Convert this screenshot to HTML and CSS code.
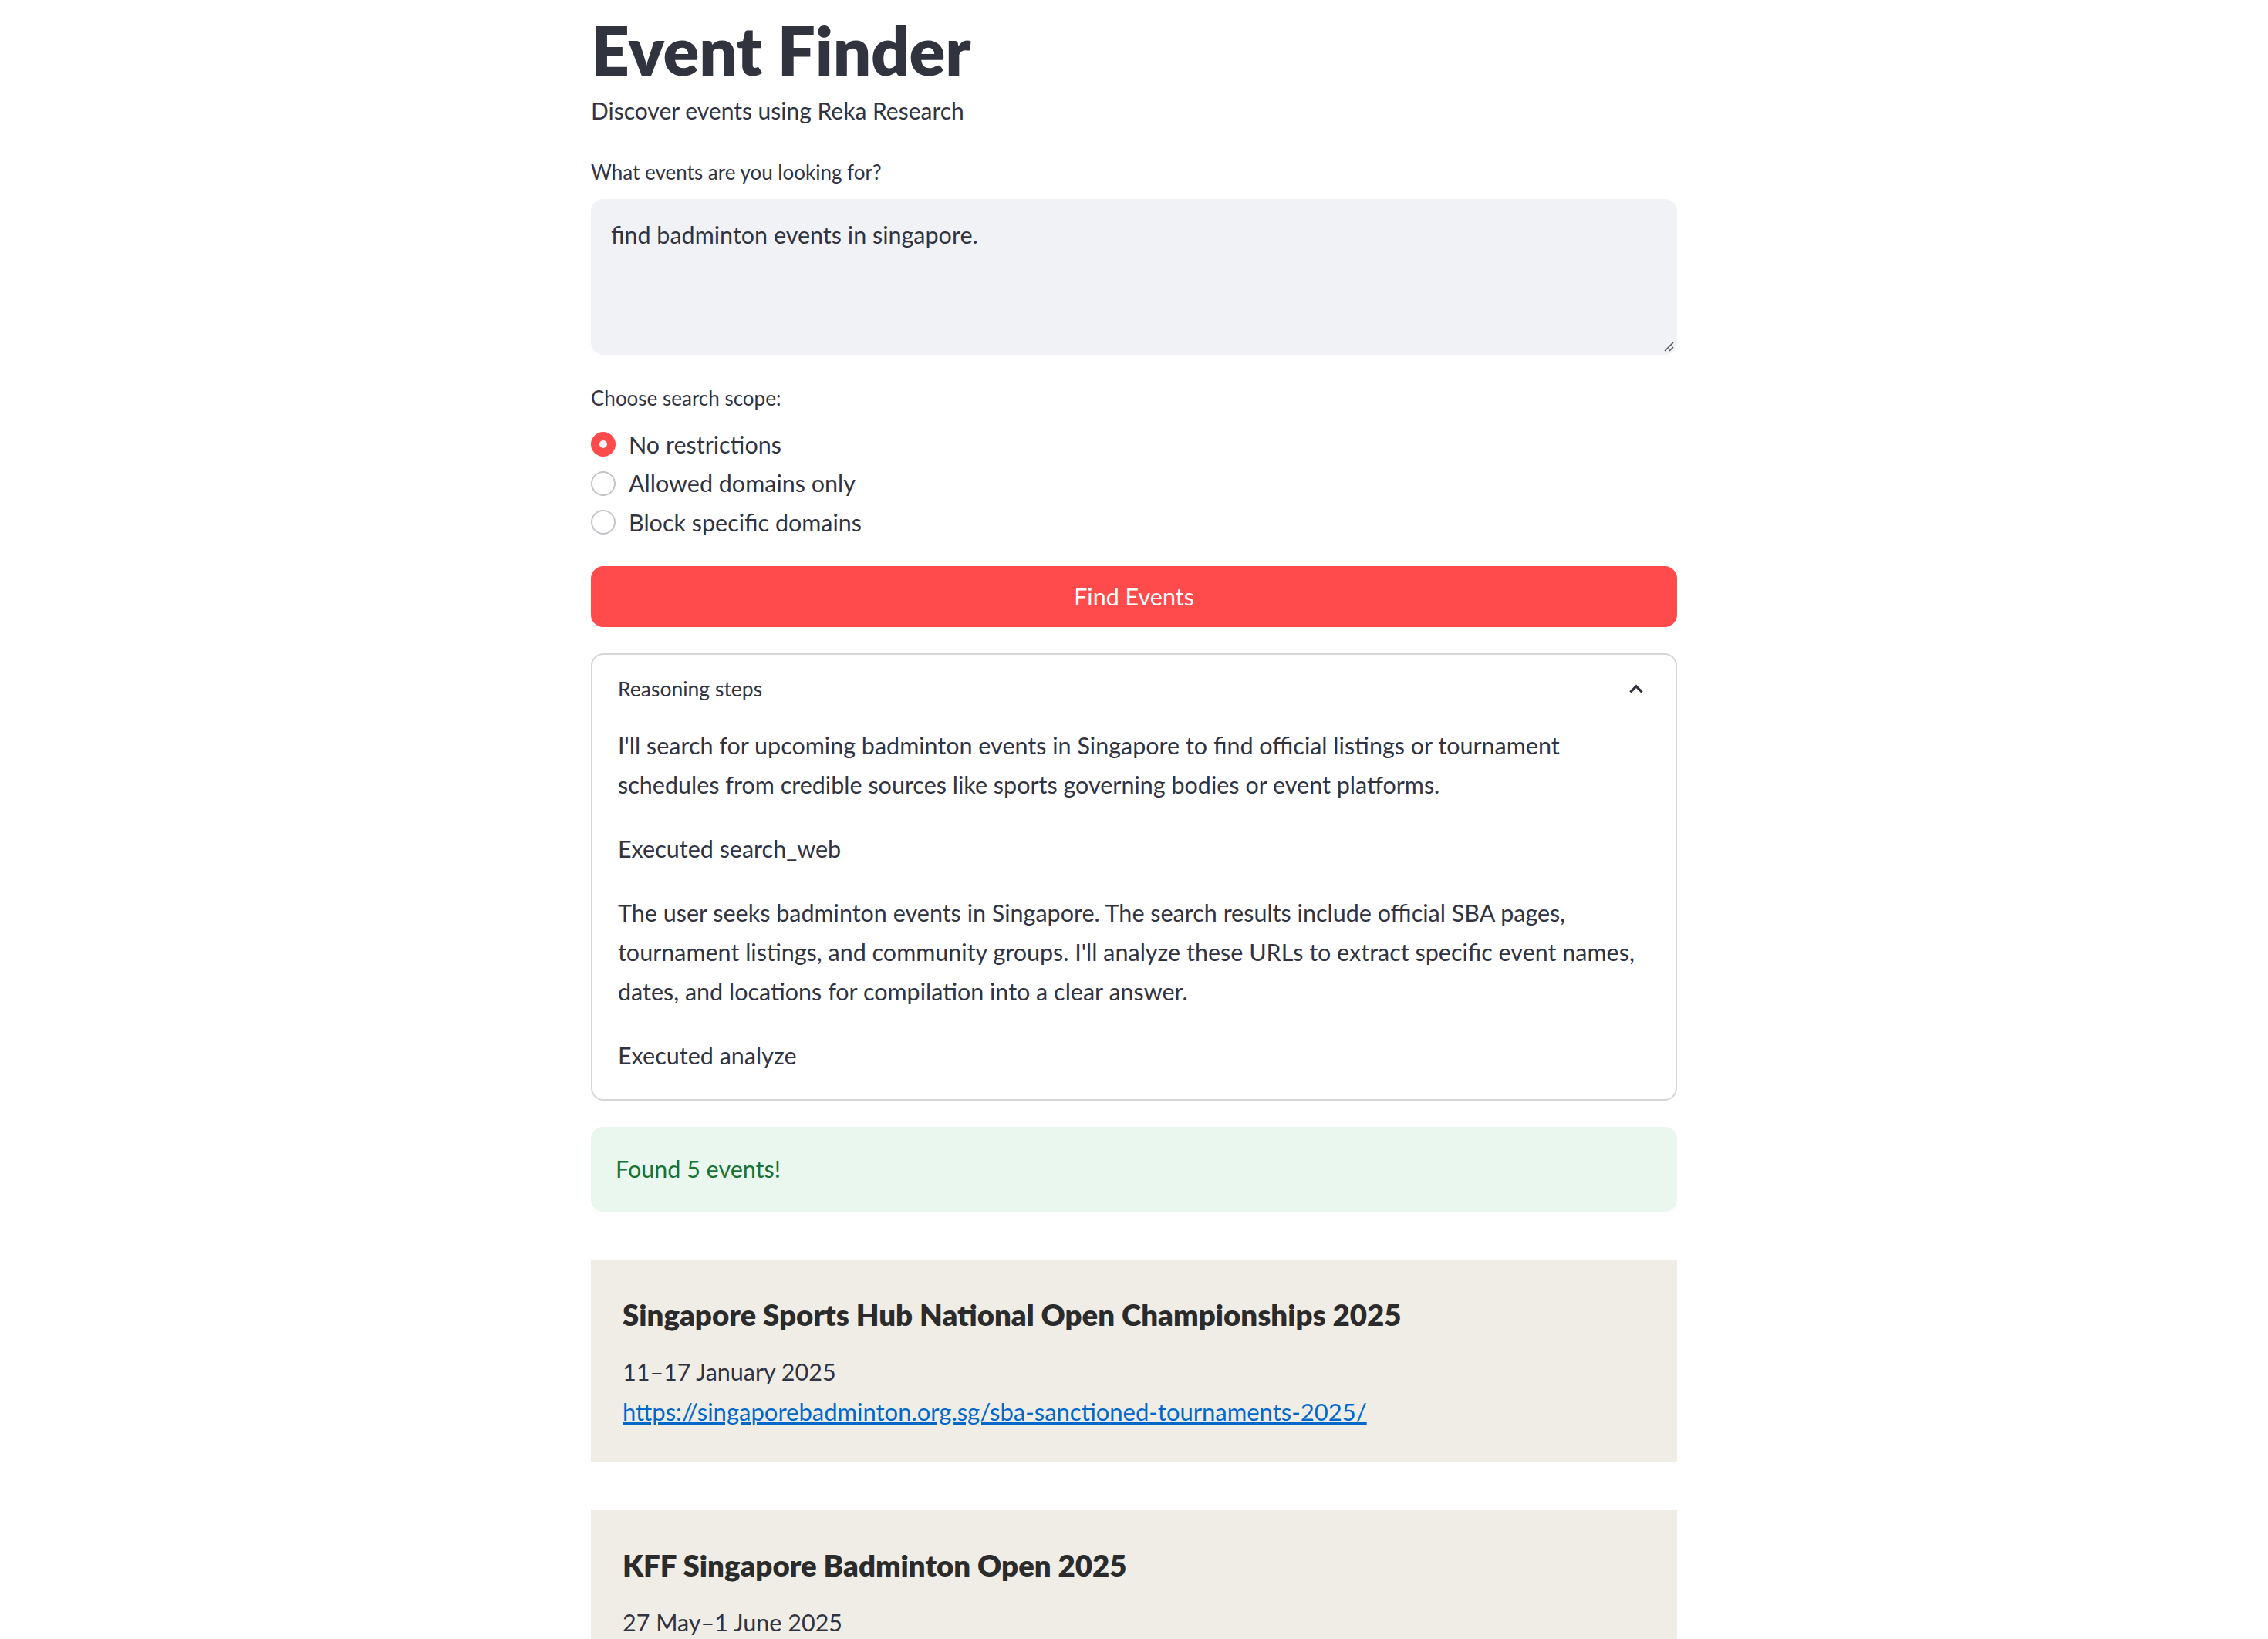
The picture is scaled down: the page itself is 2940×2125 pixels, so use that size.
FILE: index.html
```html
<!DOCTYPE html>
<html lang="en">
<head>
<meta charset="utf-8">
<title>Event Finder</title>
<link rel="stylesheet" href="styles.css">
</head>
<body>
<main class="container">
  <h1 class="title">Event Finder</h1>
  <p class="subtitle">Discover events using Reka Research</p>

  <label class="field-label" for="query">What events are you looking for?</label>
  <div class="textarea-wrap">
    <textarea id="query" class="textarea">find badminton events in singapore.</textarea>
    <svg class="resize-handle" viewBox="0 0 14 14" width="14" height="14"><path d="M2 13 L13 2 M8 13 L13 8" fill="none" stroke="#55575F" stroke-width="1.6"/></svg>
  </div>

  <div class="field-label scope-label">Choose search scope:</div>
  <div class="radio-group">
    <div class="radio-row"><span class="radio radio-on"></span><span class="radio-text">No restrictions</span></div>
    <div class="radio-row"><span class="radio"></span><span class="radio-text">Allowed domains only</span></div>
    <div class="radio-row"><span class="radio"></span><span class="radio-text">Block specific domains</span></div>
  </div>

  <button class="primary-btn">Find Events</button>

  <section class="expander">
    <div class="expander-head">
      <span>Reasoning steps</span>
      <svg class="chevron" viewBox="0 0 24 24" width="24" height="24"><path d="M5 16 L12 9 L19 16" fill="none" stroke="#31333F" stroke-width="3"/></svg>
    </div>
    <div class="expander-body">
      <p>I'll search for upcoming badminton events in Singapore to find official listings or tournament schedules from credible sources like sports governing bodies or event platforms.</p>
      <p>Executed search_web</p>
      <p>The user seeks badminton events in Singapore. The search results include official SBA pages, tournament listings, and community groups. I'll analyze these URLs to extract specific event names, dates, and locations for compilation into a clear answer.</p>
      <p>Executed analyze</p>
    </div>
  </section>

  <div class="success">Found 5 events!</div>

  <article class="card">
    <h3 class="card-title">Singapore Sports Hub National Open Championships 2025</h3>
    <div class="card-date">11–17 January 2025</div>
    <a class="card-link" href="#">https://singaporebadminton.org.sg/sba-sanctioned-tournaments-2025/</a>
  </article>

  <article class="card">
    <h3 class="card-title">KFF Singapore Badminton Open 2025</h3>
    <div class="card-date">27 May–1 June 2025</div>
    <a class="card-link" href="#">https://singaporebadminton.org.sg/</a>
  </article>
</main>
</body>
</html>
```

FILE: styles.css
```css
html, body {
  margin: 0;
  padding: 0;
  background: #ffffff;
}
body {
  font-family: "Lato", "Source Sans Pro", sans-serif;
  color: #31333F;
  font-size: 30.5px;
  line-height: 1.6;
}
.container {
  width: 1408px;
  margin: 0 auto;
  padding-top: 12px;
  padding-bottom: 80px;
}
.title {
  font-size: 87px;
  line-height: 106px;
  font-weight: 800;
  margin: 0;
  color: #31333F;
  letter-spacing: -0.3px;
}
.subtitle {
  margin: 0;
  font-size: 30px;
  line-height: 51px;
}
.field-label {
  display: block;
  font-size: 26px;
  line-height: 45px;
  margin-top: 32px;
}
.textarea-wrap {
  margin-top: 12px;
  position: relative;
}
.textarea {
  display: block;
  box-sizing: border-box;
  width: 100%;
  height: 202px;
  border: none;
  outline: none;
  border-radius: 16px;
  background: #F0F2F6;
  color: #31333F;
  font-family: inherit;
  font-size: 30.5px;
  line-height: 51px;
  padding: 21px 26px;
  resize: none;
}
.resize-handle {
  position: absolute;
  right: 4px;
  bottom: 4px;
}
.scope-label {
  margin-top: 34px;
}
.radio-group {
  margin-top: 12px;
  display: flex;
  flex-direction: column;
}
.radio-row {
  display: flex;
  align-items: center;
  height: 50.5px;
  gap: 17px;
}
.radio {
  box-sizing: border-box;
  width: 32px;
  height: 32px;
  border-radius: 50%;
  border: 2px solid #C4C5C9;
  background: #ffffff;
  flex: none;
}
.radio-on {
  border: none;
  background: #FF4B4B;
  position: relative;
}
.radio-on::after {
  content: "";
  position: absolute;
  left: 11px;
  top: 11px;
  width: 10px;
  height: 10px;
  border-radius: 50%;
  background: #F0F2F6;
}
.radio-text {
  font-size: 30.5px;
}
.primary-btn {
  display: block;
  width: 100%;
  height: 79px;
  margin-top: 31px;
  border: none;
  border-radius: 16px;
  background: #FF4B4B;
  color: #ffffff;
  font-family: inherit;
  font-size: 30.5px;
  cursor: pointer;
}
.expander {
  margin-top: 34px;
  border: 2px solid #D6D6D9;
  border-radius: 16px;
  padding: 0 32px 31px 33px;
}
.expander-head {
  display: flex;
  justify-content: space-between;
  align-items: center;
  padding-top: 22px;
  font-size: 26.5px;
  line-height: 45px;
}
.chevron {
  width: 26px;
  height: 26px;
  margin-right: 6px;
}
.expander-body {
  margin-top: 25px;
}
.expander-body p {
  margin: 0 0 32px 0;
  line-height: 51px;
}
.expander-body p:last-child {
  margin-bottom: 0;
}
.success {
  margin-top: 34px;
  box-sizing: border-box;
  height: 110px;
  display: flex;
  align-items: center;
  padding: 0 32px;
  border-radius: 16px;
  background: #E9F7EE;
  color: #177233;
}
.card {
  margin-top: 62px;
  background: #F0EDE7;
  padding: 41px 41px 40px 41px;
}
.card-title {
  margin: 0;
  font-size: 38.4px;
  line-height: 60px;
  font-weight: 800;
  color: #2B2B2B;
}
.card-date {
  margin-top: 19px;
  line-height: 51px;
}
.card-link {
  display: block;
  margin-top: 1px;
  font-size: 31px;
  line-height: 51px;
  color: #0068C9;
  text-decoration: underline;
}
```
